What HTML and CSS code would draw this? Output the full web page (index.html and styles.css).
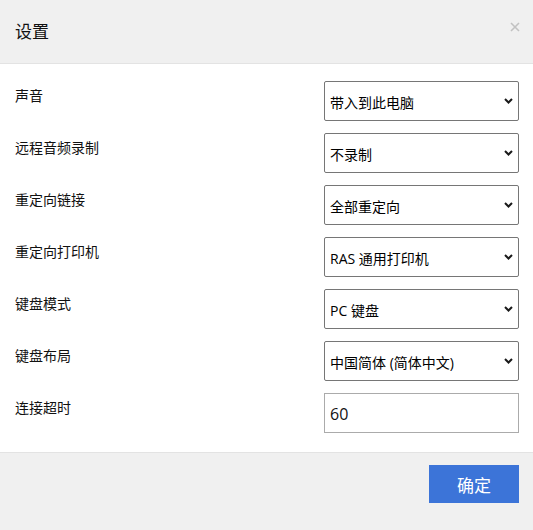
FILE: index.html
```html
<!DOCTYPE html>
<html lang="zh-CN">
<head>
<meta charset="utf-8">
<title>设置</title>
<link rel="stylesheet" href="styles.css">
</head>
<body>
<div class="dialog">
  <div class="header">
    <div class="title">设置</div>
    <button class="close" type="button" aria-label="关闭">
      <svg width="10" height="10" viewBox="0 0 10 10"><path d="M1 1 L9 9 M9 1 L1 9" stroke="#c2c2c2" stroke-width="1.6" fill="none"/></svg>
    </button>
  </div>
  <div class="body">
    <div class="row">
      <label class="label">声音</label>
      <div class="field">
        <select class="select"><option>带入到此电脑</option></select>
        <svg class="chev" width="9" height="6" viewBox="0 0 9 6"><path d="M1 1 L4.5 4.5 L8 1" stroke="#1a1a1a" stroke-width="2" fill="none"/></svg>
      </div>
    </div>
    <div class="row">
      <label class="label">远程音频录制</label>
      <div class="field">
        <select class="select"><option>不录制</option></select>
        <svg class="chev" width="9" height="6" viewBox="0 0 9 6"><path d="M1 1 L4.5 4.5 L8 1" stroke="#1a1a1a" stroke-width="2" fill="none"/></svg>
      </div>
    </div>
    <div class="row">
      <label class="label">重定向链接</label>
      <div class="field">
        <select class="select"><option>全部重定向</option></select>
        <svg class="chev" width="9" height="6" viewBox="0 0 9 6"><path d="M1 1 L4.5 4.5 L8 1" stroke="#1a1a1a" stroke-width="2" fill="none"/></svg>
      </div>
    </div>
    <div class="row">
      <label class="label">重定向打印机</label>
      <div class="field">
        <select class="select"><option>RAS 通用打印机</option></select>
        <svg class="chev" width="9" height="6" viewBox="0 0 9 6"><path d="M1 1 L4.5 4.5 L8 1" stroke="#1a1a1a" stroke-width="2" fill="none"/></svg>
      </div>
    </div>
    <div class="row">
      <label class="label">键盘模式</label>
      <div class="field">
        <select class="select"><option>PC 键盘</option></select>
        <svg class="chev" width="9" height="6" viewBox="0 0 9 6"><path d="M1 1 L4.5 4.5 L8 1" stroke="#1a1a1a" stroke-width="2" fill="none"/></svg>
      </div>
    </div>
    <div class="row">
      <label class="label">键盘布局</label>
      <div class="field">
        <select class="select"><option>中国简体 (简体中文)</option></select>
        <svg class="chev" width="9" height="6" viewBox="0 0 9 6"><path d="M1 1 L4.5 4.5 L8 1" stroke="#1a1a1a" stroke-width="2" fill="none"/></svg>
      </div>
    </div>
    <div class="row">
      <label class="label">连接超时</label>
      <div class="field">
        <input class="input" type="text" value="60">
      </div>
    </div>
  </div>
  <div class="footer">
    <button class="ok" type="button">确定</button>
  </div>
</div>
</body>
</html>
```

FILE: styles.css
```css
* { box-sizing: border-box; }
html, body { margin: 0; padding: 0; }
body {
  font-family: "Open Sans", "Noto Sans CJK SC", sans-serif;
  color: #111;
  background: #f0f0f0;
}
.dialog {
  width: 533px;
  height: 530px;
  display: flex;
  flex-direction: column;
  background: #f0f0f0;
}
.header {
  height: 64px;
  border-bottom: 1px solid #e3e3e3;
  display: flex;
  justify-content: space-between;
  align-items: flex-start;
  padding: 0 13px 0 15px;
}
.title {
  font-size: 17px;
  line-height: 24px;
  margin-top: 20px;
  color: #111;
}
.close {
  border: none;
  background: none;
  padding: 0;
  margin-top: 22px;
  width: 10px;
  height: 10px;
  display: flex;
}
.body {
  background: #fff;
  padding: 17px 14px 19px 15px;
  display: flex;
  flex-direction: column;
  gap: 12px;
}
.row {
  display: flex;
  justify-content: space-between;
  align-items: flex-start;
  height: 40px;
}
.label {
  font-size: 14px;
  line-height: 20px;
  margin-top: 5px;
  color: #111;
}
.field {
  position: relative;
  width: 195px;
  height: 40px;
}
.select {
  appearance: none;
  -webkit-appearance: none;
  width: 100%;
  height: 100%;
  border: 1px solid #767676;
  border-radius: 2px;
  background: #fff;
  font-family: inherit;
  font-size: 14px;
  color: #000;
  padding: 2px 20px 0 5px;
  margin: 0;
}
.chev {
  position: absolute;
  right: 6px;
  top: 17px;
  pointer-events: none;
}
.input {
  width: 100%;
  height: 100%;
  border: 1px solid #ababab;
  background: #fff;
  font-family: inherit;
  font-size: 16px;
  color: #111;
  padding: 2px 5px 0 5px;
  margin: 0;
  border-radius: 0;
}
.footer {
  flex: 1;
  border-top: 1px solid #e3e3e3;
  display: flex;
  justify-content: flex-end;
  align-items: flex-start;
  padding: 12px 14px 0 0;
}
.ok {
  width: 90px;
  height: 38px;
  border: none;
  border-radius: 0;
  background: #3c74d8;
  color: #fff;
  font-family: inherit;
  font-size: 17px;
  padding: 0;
}
```
